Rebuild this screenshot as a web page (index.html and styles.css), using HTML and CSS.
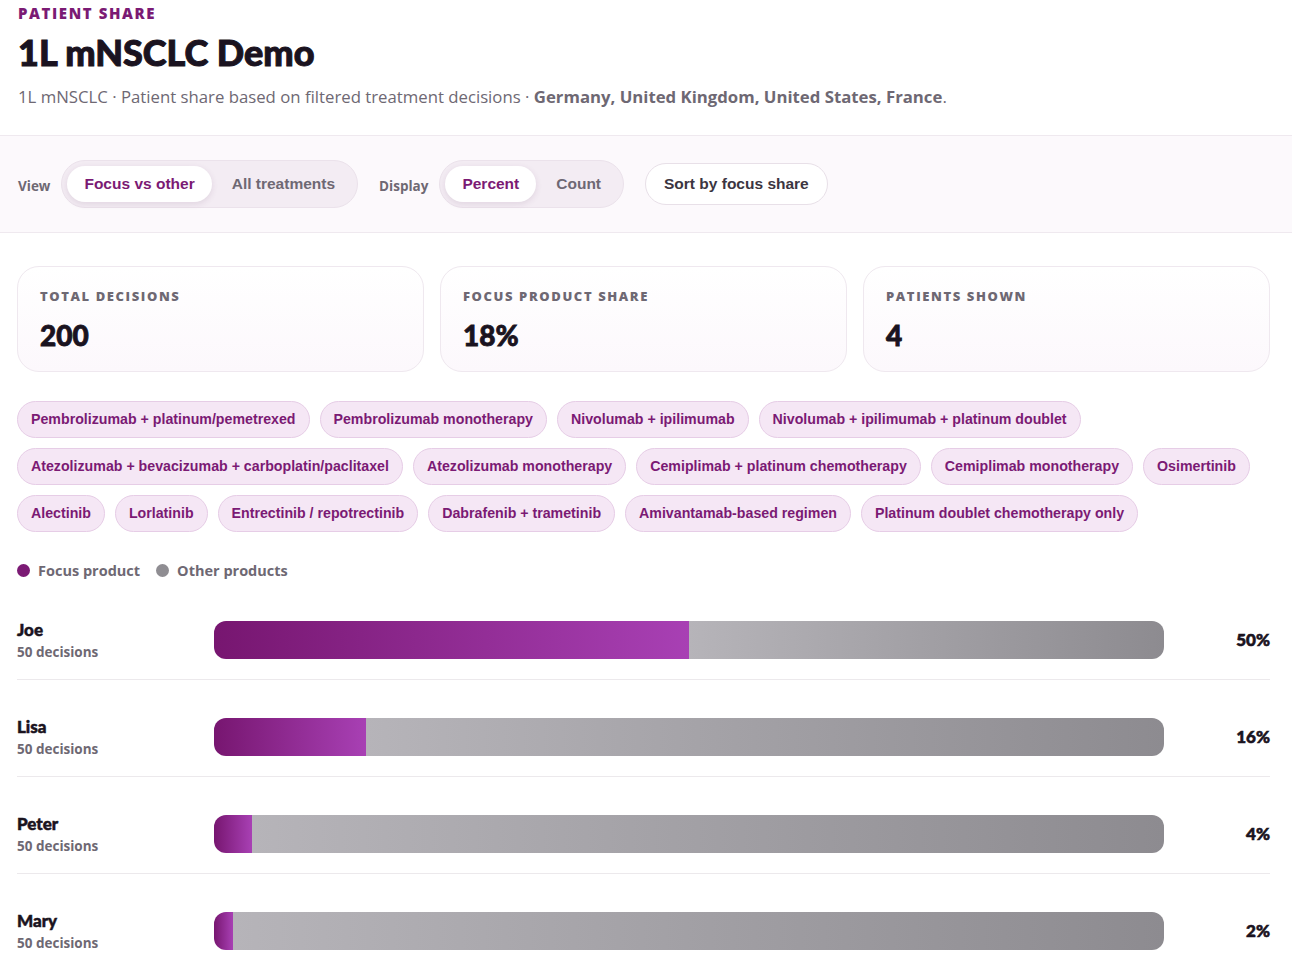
FILE: index.html
```html
<!DOCTYPE html>
<html lang="en">
<head>
    <meta charset="UTF-8">
    <meta name="viewport" content="width=device-width, initial-scale=1.0">
    <title>Patient Share</title>
    <link rel="stylesheet" href="styles.css">
</head>
<body>
    <header class="page-head">
        <div class="eyebrow">Patient share</div>
        <h1>1L mNSCLC Demo</h1>
        <p class="subtitle">1L mNSCLC · Patient share based on filtered treatment decisions · <b>Germany, United Kingdom, United States, France</b>.</p>
    </header>

    <div class="toolbar">
        <div class="group">
            <span class="group-label">View</span>
            <div class="segmented">
                <button class="seg active">Focus vs other</button>
                <button class="seg">All treatments</button>
            </div>
        </div>
        <div class="group">
            <span class="group-label">Display</span>
            <div class="segmented">
                <button class="seg active">Percent</button>
                <button class="seg">Count</button>
            </div>
        </div>
        <button class="btn-sort">Sort by focus share</button>
    </div>

    <main class="content">
        <div class="stats">
            <div class="stat">
                <div class="stat-label">Total decisions</div>
                <div class="stat-value">200</div>
            </div>
            <div class="stat">
                <div class="stat-label">Focus product share</div>
                <div class="stat-value">18%</div>
            </div>
            <div class="stat">
                <div class="stat-label">Patients shown</div>
                <div class="stat-value">4</div>
            </div>
        </div>

        <div class="chips" id="chips"></div>

        <div class="legend">
            <span class="legend-item"><i class="dot focus"></i>Focus product</span>
            <span class="legend-item"><i class="dot other"></i>Other products</span>
        </div>

        <div class="rows" id="rows"></div>
    </main>

    <script>
        const treatments = [
            'Pembrolizumab + platinum/pemetrexed',
            'Pembrolizumab monotherapy',
            'Nivolumab + ipilimumab',
            'Nivolumab + ipilimumab + platinum doublet',
            'Atezolizumab + bevacizumab + carboplatin/paclitaxel',
            'Atezolizumab monotherapy',
            'Cemiplimab + platinum chemotherapy',
            'Cemiplimab monotherapy',
            'Osimertinib',
            'Alectinib',
            'Lorlatinib',
            'Entrectinib / repotrectinib',
            'Dabrafenib + trametinib',
            'Amivantamab-based regimen',
            'Platinum doublet chemotherapy only'
        ];

        const patients = [
            { name: 'Joe', decisions: 50, focus: 25 },
            { name: 'Lisa', decisions: 50, focus: 8 },
            { name: 'Peter', decisions: 50, focus: 2 },
            { name: 'Mary', decisions: 50, focus: 1 }
        ];

        function renderChips() {
            const chips = document.getElementById('chips');
            treatments.forEach(t => {
                const chip = document.createElement('span');
                chip.className = 'chip';
                chip.textContent = t;
                chips.appendChild(chip);
            });
        }

        function renderRows() {
            const rows = document.getElementById('rows');
            patients.forEach(p => {
                const pct = Math.round(p.focus / p.decisions * 100);
                const row = document.createElement('div');
                row.className = 'row';
                row.innerHTML = `
                    <div class="who">
                        <div class="who-name">${p.name}</div>
                        <div class="who-sub">${p.decisions} decisions</div>
                    </div>
                    <div class="bar">
                        <div class="bar-focus" style="width: ${pct}%"></div>
                        <div class="bar-other"></div>
                    </div>
                    <div class="pct">${pct}%</div>`;
                rows.appendChild(row);
            });
        }

        renderChips();
        renderRows();
    </script>
</body>
</html>
```

FILE: styles.css
```css
body {
    margin: 0;
    font-family: "Open Sans", Arial, sans-serif;
    color: #1c1520;
    background: #fff;
}
.page-head {
    padding: 3px 22px 27px 18px;
    border-bottom: 1px solid #efe9ef;
}
.eyebrow {
    font-size: 15px;
    font-weight: 800;
    letter-spacing: 1.6px;
    text-transform: uppercase;
    color: #7b1a74;
    line-height: 20px;
}
h1 {
    font-family: Lato, sans-serif;
    font-weight: 900;
    font-size: 36px;
    line-height: 44px;
    margin: 7px 0 0;
    color: #1a1320;
    -webkit-text-stroke: 1px #1a1320;
}
.subtitle {
    margin: 11px 0 0;
    font-size: 16.75px;
    color: #6e6873;
}
.subtitle b {
    font-weight: 700;
}

.toolbar {
    display: flex;
    align-items: center;
    gap: 21px;
    padding: 24px 22px 24px 18px;
    background: #fcf9fc;
    border-bottom: 1px solid #efe9ef;
}
.group {
    display: flex;
    align-items: center;
    gap: 11px;
}
.group-label {
    font-size: 13.5px;
    font-weight: 700;
    color: #6e6873;
    margin-top: 3px;
}
.segmented {
    display: flex;
    gap: 3px;
    padding: 5px;
    background: #f3ecf3;
    border: 1px solid #ebe2eb;
    border-radius: 25px;
}
.seg {
    font-family: "Liberation Sans", Arial, sans-serif;
    font-size: 15.5px;
    font-weight: 700;
    color: #6e6873;
    background: none;
    border: none;
    height: 36px;
    padding: 0 17px;
    border-radius: 18px;
    cursor: pointer;
}
.seg.active {
    background: #fff;
    color: #7b1a74;
    box-shadow: 0 2px 6px rgba(90, 40, 90, 0.12);
}
.btn-sort {
    font-family: "Liberation Sans", Arial, sans-serif;
    font-size: 15.5px;
    font-weight: 700;
    color: #3b3541;
    background: #fff;
    border: 1px solid #e8e0e8;
    border-radius: 21px;
    height: 42px;
    padding: 0 18px;
    cursor: pointer;
}

.content {
    padding: 33px 22px 0 17px;
}
.stats {
    display: grid;
    grid-template-columns: repeat(3, 1fr);
    gap: 16px;
}
.stat {
    height: 106px;
    box-sizing: border-box;
    padding: 20px 22px 0;
    border: 1px solid #efe8ef;
    border-radius: 22px;
    background: linear-gradient(180deg, #fff, #fcf8fc);
}
.stat-label {
    font-size: 13px;
    font-weight: 800;
    letter-spacing: 1.6px;
    text-transform: uppercase;
    color: #6e6873;
}
.stat-value {
    font-family: Lato, sans-serif;
    font-size: 28px;
    font-weight: 900;
    margin-top: 13px;
    color: #1a1320;
    -webkit-text-stroke: 0.8px #1a1320;
}

.chips {
    display: flex;
    flex-wrap: wrap;
    gap: 10px;
    margin-top: 29px;
}
.chip {
    font-family: "Liberation Sans", Arial, sans-serif;
    font-size: 14.2px;
    font-weight: 700;
    color: #7b1a74;
    background: #f5e7f5;
    border: 1px solid #e6cde6;
    border-radius: 19px;
    padding: 0 13px;
    height: 35px;
    line-height: 35px;
}

.legend {
    display: flex;
    gap: 16px;
    margin-top: 29px;
    font-size: 14.5px;
    font-weight: 700;
    color: #6e6873;
}
.legend-item {
    display: flex;
    align-items: center;
    gap: 8px;
}
.dot {
    width: 13px;
    height: 13px;
    border-radius: 50%;
}
.dot.focus {
    background: #7b1a74;
}
.dot.other {
    background: #8f8d92;
}

.row {
    display: grid;
    grid-template-columns: 181px 1fr 90px;
    gap: 16px;
    align-items: center;
    padding: 32px 0 15px;
    border-bottom: 1px solid #ece9ec;
}
.rows .row:first-child {
    padding-top: 35px;
}
.row:last-child {
    border-bottom: none;
}
.who {
    padding-top: 4px;
}
.who-name {
    font-family: Lato, sans-serif;
    font-size: 17px;
    font-weight: 900;
    line-height: 22px;
    color: #1a1320;
    -webkit-text-stroke: 0.5px #1a1320;
}
.who-sub {
    font-size: 13.5px;
    font-weight: 700;
    line-height: 23px;
    color: #6e6873;
}
.bar {
    display: flex;
    height: 38px;
    border-radius: 12px;
    overflow: hidden;
}
.bar-focus {
    background: linear-gradient(90deg, #771670, #a840b4);
}
.bar-other {
    flex: 1;
    background: linear-gradient(90deg, #b6b4b9, #8d8b90);
}
.pct {
    text-align: right;
    font-family: Lato, sans-serif;
    font-size: 17px;
    font-weight: 900;
    color: #1a1320;
    -webkit-text-stroke: 0.6px #1a1320;
}
```
